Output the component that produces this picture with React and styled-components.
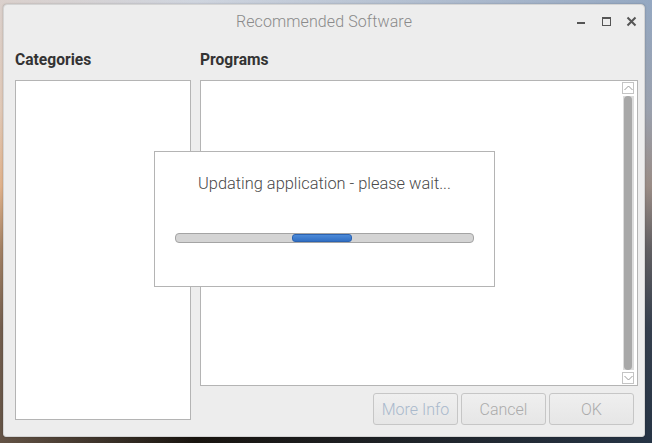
import styled, { createGlobalStyle } from 'styled-components';

const GlobalStyle = createGlobalStyle`
  html, body {
    margin: 0;
    padding: 0;
  }
  body {
    width: 652px;
    height: 443px;
    overflow: hidden;
    font-family: Roboto, "Liberation Sans", sans-serif;
    background:
      linear-gradient(90deg, rgba(240, 200, 170, 0.35) 0%, rgba(0, 0, 0, 0) 30%, rgba(60, 100, 150, 0.4) 100%),
      linear-gradient(180deg, #cfd5df 0%, #d8c8bc 25%, #d7a67a 42%, #7a5c40 56%, #30261d 74%, #18140f 100%);
  }
`;

const Desktop = styled.div`
  padding: 4px 8px 0 3px;
`;

const Window = styled.div`
  position: relative;
  width: 640px;
  height: 431px;
  background: #ededed;
  border: 1px solid #d4d4d4;
  border-radius: 4px 4px 3px 3px;
  box-shadow: 0 0 2px rgba(0, 0, 0, 0.25);
  display: flex;
  flex-direction: column;
`;

const TitleBar = styled.div`
  height: 32px;
  display: grid;
  grid-template-columns: 1fr auto 1fr;
  align-items: center;
`;

const Title = styled.div`
  grid-column: 2;
  font-size: 16px;
  font-weight: 300;
  color: #8a8a8a;
  letter-spacing: 0.1px;
`;

const Controls = styled.div`
  justify-self: end;
  display: flex;
  align-items: center;
  gap: 14px;
  padding-right: 7px;
  height: 32px;
`;

const CtlIcon = styled.svg`
  display: block;
  width: 11px;
  height: 11px;
  color: #555;
`;

const Body = styled.div`
  flex: 1;
  display: flex;
  gap: 9px;
  padding: 12px 6px 0 11px;
`;

const Column = styled.div`
  display: flex;
  flex-direction: column;
  width: ${p => p.$width}px;
`;

const Heading = styled.div`
  height: 31px;
  line-height: 22px;
  font-size: 15.6px;
  font-weight: 700;
  color: #333;
`;

const List = styled.div`
  height: ${p => p.$height}px;
  background: #fff;
  border: 1px solid #b4b4b4;
  box-sizing: border-box;
  display: flex;
  justify-content: flex-end;
`;

const Scrollbar = styled.div`
  width: 14px;
  padding: 1px 2px 1px 0;
  display: flex;
  flex-direction: column;
  align-items: center;
`;

const Stepper = styled.div`
  width: 12px;
  height: 12px;
  box-sizing: border-box;
  border: 1px solid #c4c4c4;
  background: #fff;
  display: flex;
  align-items: center;
  justify-content: center;
`;

const Trough = styled.div`
  flex: 1;
  width: 11px;
  margin: 2px 0;
  background: #dcdcdc;
  display: flex;
  justify-content: center;
`;

const Thumb = styled.div`
  width: 8px;
  height: 100%;
  border-radius: 4px;
  background: #a8a8a8;
`;

const ButtonRow = styled.div`
  display: flex;
  justify-content: flex-end;
  gap: 3px;
  margin-top: 7px;
  padding-right: 4px;
`;

const Button = styled.button`
  width: 85px;
  height: 32px;
  border: 1px solid #c6c6c6;
  border-radius: 3px;
  background: linear-gradient(180deg, #efefef, #e6e6e6);
  font-family: Roboto, "Liberation Sans", sans-serif;
  font-size: 16px;
  font-weight: 300;
  color: ${p => (p.$focus ? '#a9b9cc' : '#ababab')};
  padding: 0;
`;

const Dialog = styled.div`
  position: absolute;
  left: 150px;
  top: 146px;
  width: 341px;
  height: 136px;
  box-sizing: border-box;
  background: #fff;
  border: 1px solid #b4b4b4;
  display: flex;
  flex-direction: column;
  align-items: center;
  padding-top: 21px;
`;

const Message = styled.div`
  font-size: 16.4px;
  font-weight: 300;
  line-height: 22px;
  color: #4a4a4a;
`;

const Progress = styled.div`
  margin-top: 38px;
  width: 299px;
  height: 10px;
  box-sizing: border-box;
  border: 1px solid #a4a4a4;
  border-radius: 4px;
  background: #d4d4d4;
  display: flex;
  align-items: center;
`;

const Chunk = styled.div`
  margin-left: ${p => p.$offset}px;
  width: ${p => p.$size}px;
  height: 8px;
  box-sizing: border-box;
  border-radius: 3px;
  background: linear-gradient(180deg, #4c8ad8, #3270c4);
  border: 1px solid #2b63b2;
`;

const Chevron = ({ up }) => (
  <svg width="9" height="6" viewBox="0 0 9 6">
    <path
      d={up ? 'M0.5 5 L4.5 1 L8.5 5' : 'M0.5 1 L4.5 5 L8.5 1'}
      fill="none"
      stroke="#9a9a9a"
      strokeWidth="1"
    />
  </svg>
);

export default function App() {
  return (
    <Desktop>
      <GlobalStyle />
      <Window>
        <TitleBar>
          <Title>Recommended Software</Title>
          <Controls>
            <CtlIcon viewBox="0 0 11 11">
              <rect x="1" y="6" width="8" height="2" fill="currentColor" />
            </CtlIcon>
            <CtlIcon viewBox="0 0 11 11">
              <rect x="1.5" y="1.5" width="8" height="8" fill="none" stroke="currentColor" strokeWidth="1" />
              <rect x="1" y="1" width="9" height="2" fill="currentColor" />
            </CtlIcon>
            <CtlIcon viewBox="0 0 11 11">
              <path d="M1.5 1.5 L9.5 9.5 M9.5 1.5 L1.5 9.5" stroke="currentColor" strokeWidth="2" />
            </CtlIcon>
          </Controls>
        </TitleBar>
        <Body>
          <Column $width={176}>
            <Heading>Categories</Heading>
            <List $height={340} />
          </Column>
          <Column $width={438}>
            <Heading>Programs</Heading>
            <List $height={306}>
              <Scrollbar>
                <Stepper>
                  <Chevron up />
                </Stepper>
                <Trough>
                  <Thumb />
                </Trough>
                <Stepper>
                  <Chevron />
                </Stepper>
              </Scrollbar>
            </List>
            <ButtonRow>
              <Button $focus>More Info</Button>
              <Button>Cancel</Button>
              <Button>OK</Button>
            </ButtonRow>
          </Column>
        </Body>
        <Dialog>
          <Message>Updating application - please wait...</Message>
          <Progress>
            <Chunk $offset={116} $size={60} />
          </Progress>
        </Dialog>
      </Window>
    </Desktop>
  );
}
